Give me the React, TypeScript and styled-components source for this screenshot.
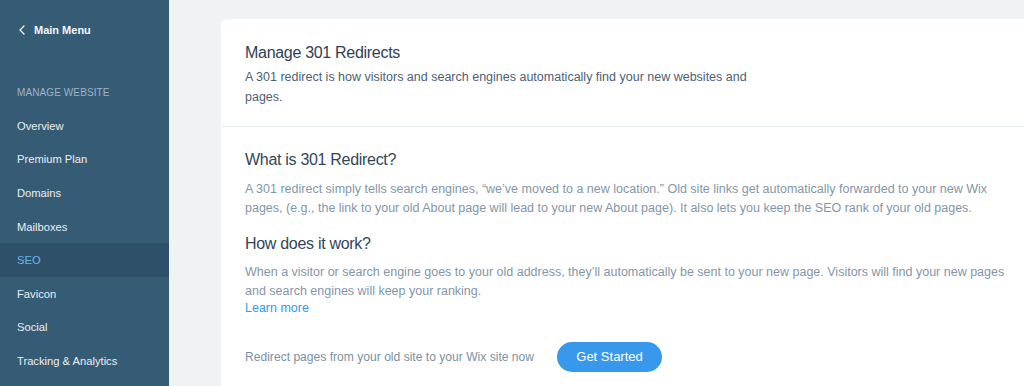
import React from 'react';
import styled, { createGlobalStyle } from 'styled-components';

const GlobalStyle = createGlobalStyle`
  html, body {
    margin: 0;
    padding: 0;
    background: #eff3f6;
    font-family: 'Liberation Sans', Arial, sans-serif;
    -webkit-font-smoothing: antialiased;
  }
`;

const Page = styled.div`
  display: flex;
  width: 1024px;
  height: 386px;
  overflow: hidden;
  background: #eff3f6;
`;

const Sidebar = styled.nav`
  flex: 0 0 169px;
  background: #365b75;
  display: flex;
  flex-direction: column;
`;

const BackLink = styled.div`
  display: flex;
  align-items: center;
  gap: 9px;
  height: 20px;
  margin-top: 20px;
  padding-left: 19px;
  color: #f4f7fa;
  font-size: 11px;
  font-weight: bold;
`;

const SectionLabel = styled.div`
  margin-top: 43px;
  height: 20px;
  line-height: 20px;
  padding-left: 17px;
  font-size: 10px;
  letter-spacing: 0.1px;
  color: #9fb3c4;
  text-transform: uppercase;
`;

const MenuList = styled.ul`
  list-style: none;
  margin: 6px 0 0;
  padding: 0;
`;

const MenuItem = styled.li<{ $active?: boolean }>`
  height: 33.6px;
  display: flex;
  align-items: center;
  padding-left: 17px;
  font-size: 11.2px;
  color: ${({ $active }) => ($active ? '#6ab8f0' : '#e9eff4')};
  background: ${({ $active }) => ($active ? '#2e5069' : 'transparent')};
`;

const Main = styled.main`
  flex: 1;
  min-width: 0;
  padding: 19px 0 0 52px;
  display: flex;
`;

const Card = styled.section`
  flex: 1;
  min-width: 0;
  background: #ffffff;
  border-radius: 6px 0 0 0;
  color: #32465a;
`;

const CardHeader = styled.header`
  padding: 24px 24px 18.7px;
  border-bottom: 1px solid #e6ebf0;
`;

const Title = styled.h1`
  margin: 0;
  font-size: 16px;
  line-height: 20px;
  font-weight: normal;
  color: #2f4154;
  letter-spacing: -0.3px;
`;

const Subtitle = styled.p`
  margin: 4px 0 0;
  max-width: 510px;
  font-size: 12.5px;
  line-height: 20px;
  color: #4d6175;
`;

const CardBody = styled.div`
  padding: 23.7px 24px 0;
`;

const Heading = styled.h2<{ $gap?: number }>`
  margin: ${({ $gap }) => $gap ?? 0}px 0 0;
  font-size: 16px;
  line-height: 20px;
  font-weight: normal;
  color: #32465a;
  letter-spacing: -0.3px;
`;

const Paragraph = styled.p`
  margin: 9.8px 0 0;
  width: 768px;
  font-size: 12.5px;
  line-height: 19px;
  color: #8396a9;
`;

const LearnMore = styled.a`
  display: block;
  width: max-content;
  font-size: 12.5px;
  line-height: 15px;
  color: #3899ec;
  text-decoration: none;
`;

const ActionRow = styled.div`
  display: flex;
  align-items: center;
  gap: 23px;
  margin-top: 25.5px;
`;

const ActionText = styled.span`
  font-size: 12.1px;
  color: #7d90a3;
`;

const PrimaryButton = styled.button`
  height: 30px;
  width: 105px;
  border: none;
  border-radius: 15px;
  background: #3899ec;
  color: #ffffff;
  font-family: inherit;
  font-size: 13px;
  padding: 0;
  cursor: pointer;
`;

const menuItems = [
  'Overview',
  'Premium Plan',
  'Domains',
  'Mailboxes',
  'SEO',
  'Favicon',
  'Social',
  'Tracking & Analytics',
];

const ChevronLeft = () => (
  <svg width="6" height="10" viewBox="0 0 6 10" fill="none">
    <polyline
      points="5,1 1,5 5,9"
      stroke="#f4f7fa"
      strokeWidth="1.3"
      strokeLinecap="round"
      strokeLinejoin="round"
    />
  </svg>
);

const App = () => (
  <Page>
    <GlobalStyle />
    <Sidebar>
      <BackLink>
        <ChevronLeft />
        Main Menu
      </BackLink>
      <SectionLabel>Manage Website</SectionLabel>
      <MenuList>
        {menuItems.map((item) => (
          <MenuItem key={item} $active={item === 'SEO'}>
            {item}
          </MenuItem>
        ))}
      </MenuList>
    </Sidebar>
    <Main>
      <Card>
        <CardHeader>
          <Title>Manage 301 Redirects</Title>
          <Subtitle>
            A 301 redirect is how visitors and search engines automatically find
            your new websites and pages.
          </Subtitle>
        </CardHeader>
        <CardBody>
          <Heading>What is 301 Redirect?</Heading>
          <Paragraph>
            A 301 redirect simply tells search engines, “we’ve moved to a new
            location.” Old site links get automatically forwarded to your new Wix
            pages, (e.g., the link to your old About page will lead to your new
            About page). It also lets you keep the SEO rank of your old pages.
          </Paragraph>
          <Heading $gap={15.5}>How does it work?</Heading>
          <Paragraph>
            When a visitor or search engine goes to your old address, they’ll
            automatically be sent to your new page. Visitors will find your new
            pages and search engines will keep your ranking.
          </Paragraph>
          <LearnMore href="#">Learn more</LearnMore>
          <ActionRow>
            <ActionText>Redirect pages from your old site to your Wix site now</ActionText>
            <PrimaryButton>Get Started</PrimaryButton>
          </ActionRow>
        </CardBody>
      </Card>
    </Main>
  </Page>
);

export default App;
